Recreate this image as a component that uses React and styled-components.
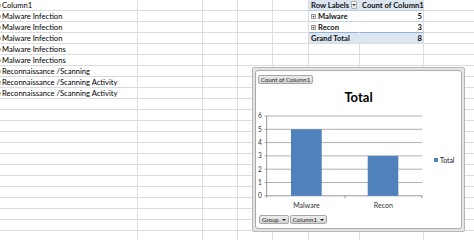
import React from 'react';
import styled, { createGlobalStyle } from 'styled-components';

const GlobalStyle = createGlobalStyle`
  html, body { margin: 0; padding: 0; background: #fff; overflow: hidden; }
  body { font-family: Lato, "Liberation Sans", sans-serif; color: #000; }
`;

const Page = styled.div`
  position: relative;
  width: 474px;
  height: 240px;
  overflow: hidden;
  background: #fff;
`;

const Sheet = styled.div`
  display: grid;
  grid-template-columns: 138px 65px 35px 35px 36px 51px 64px 60px;
  grid-auto-rows: 11px;
`;

const Cell = styled.div`
  box-sizing: border-box;
  position: relative;
  display: flex;
  align-items: center;
  justify-content: ${p => (p.$align === 'right' ? 'flex-end' : p.$align === 'between' ? 'space-between' : 'flex-start')};
  gap: 2px;
  padding: 0 ${p => (p.$align === 'right' ? '1px' : '0')} 0 ${p => p.$indent ?? 2}px;
  border-right: 1px solid ${p => (p.$noRight ? 'transparent' : '#dadcdd')};
  border-bottom: 1px solid ${p => p.$bottom || '#dadcdd'};
  background: ${p => p.$bg || 'transparent'};
  font-size: 7.6px;
  line-height: 10px;
  font-weight: ${p => (p.$bold ? 700 : 400)};
  color: ${p => (p.$bold ? '#111' : '#000')};
  white-space: nowrap;
`;

const Mark = styled.span`
  position: absolute;
  left: 0;
  top: 4px;
  width: 1px;
  height: 3px;
  background: #d8b985;
`;

const DropButton = styled.span`
  box-sizing: border-box;
  width: 8px;
  height: 8px;
  margin-right: 2px;
  border: 1px solid #b0b0b0;
  border-radius: 1px;
  background: linear-gradient(#ffffff, #e4e4e4);
  display: flex;
  align-items: center;
  justify-content: center;
  &::after {
    content: '';
    border-left: 2px solid transparent;
    border-right: 2px solid transparent;
    border-top: 2px solid #444;
  }
`;

const ExpandIcon = () => (
  <svg width="5" height="5" viewBox="0 0 5 5" style={{ flex: 'none' }}>
    <rect x="0.5" y="0.5" width="4" height="4" fill="#fff" stroke="#9a9a9a" strokeWidth="1" />
    <path d="M1.5 2.5h2M2.5 1.5v2" stroke="#444" strokeWidth="0.8" />
  </svg>
);

const ChartFrame = styled.div`
  position: absolute;
  left: 252px;
  top: 67px;
  width: 213px;
  height: 165px;
  box-sizing: border-box;
  border: 1px solid #b8b8b8;
  border-radius: 2px;
  background: #e4e4e4;
  padding: 2px;
`;

const Grip = styled.span`
  position: absolute;
  left: 101px;
  ${p => (p.$bottom ? 'bottom: 0;' : 'top: 0;')}
  width: 10px;
  height: 2px;
  background-image: radial-gradient(circle, #8a8a8a 0.6px, transparent 0.7px);
  background-size: 2px 2px;
`;

const ChartArea = styled.div`
  box-sizing: border-box;
  width: 100%;
  height: 100%;
  background: #fff;
  border: 1px solid #ababab;
  border-radius: 3px;
  display: flex;
  flex-direction: column;
  padding-top: 4px;
`;

const FieldButton = styled.div`
  box-sizing: border-box;
  height: 9px;
  display: inline-flex;
  align-items: center;
  gap: 3px;
  padding: 0 ${p => (p.$drop ? '2px' : '2px')} 0 2px;
  border: 1px solid #a8a8a8;
  border-radius: 2px;
  background: linear-gradient(#ededed, #d2d2d2);
  color: #2b2b2b;
  font-size: 6.1px;
  line-height: 7px;
  white-space: nowrap;
`;

const TopButtons = styled.div`
  display: flex;
  padding-left: 2px;
`;

const Arrow = styled.span`
  border-left: 2px solid transparent;
  border-right: 2px solid transparent;
  border-top: 2.5px solid #222;
`;

const Title = styled.div`
  margin-top: 5px;
  height: 16px;
  line-height: 16px;
  text-align: center;
  font-size: 13px;
  font-weight: 700;
  color: #000;
`;

const PlotRow = styled.div`
  margin-top: 5px;
  height: 100px;
  display: flex;
  align-items: center;
`;

const Legend = styled.div`
  margin-left: 2px;
  display: flex;
  align-items: center;
  gap: 2px;
  font-size: 6.8px;
  color: #222;
`;

const LegendKey = styled.span`
  width: 4px;
  height: 4px;
  background: #4f81bd;
`;

const Footer = styled.div`
  margin-top: 5px;
  padding-left: 3px;
  display: flex;
  gap: 1px;
`;

const COL_A = [
  'Column1',
  'Malware Infection',
  'Malware Infection',
  'Malware Infection',
  'Malware Infections',
  'Malware Infections',
  'Reconnaissance /Scanning',
  'Reconnaissance /Scanning Activity',
  'Reconnaissance /Scanning Activity',
];

const PIVOT_BG = '#dce6f1';

function pivotCells(r) {
  if (r === 0)
    return [
      <Cell key="f" $bg={PIVOT_BG} $bold $noRight $align="between" $bottom="#b8cce4">
        <span>Row Labels</span>
        <DropButton />
      </Cell>,
      <Cell key="g" $bg={PIVOT_BG} $bold $bottom="#b8cce4">Count of Column1</Cell>,
    ];
  if (r === 1 || r === 2)
    return [
      <Cell key="f" $bold $noRight $bottom={r === 1 ? '#c6d7ec' : '#95b3d7'} $indent={2}>
        <ExpandIcon />
        <span>{r === 1 ? 'Malware' : 'Recon'}</span>
      </Cell>,
      <Cell key="g" $bold $align="right" $bottom={r === 1 ? '#c6d7ec' : '#95b3d7'}>{r === 1 ? '5' : '3'}</Cell>,
    ];
  if (r === 3)
    return [
      <Cell key="f" $bg={PIVOT_BG} $bold $noRight>Grand Total</Cell>,
      <Cell key="g" $bg={PIVOT_BG} $bold $align="right">8</Cell>,
    ];
  return [<Cell key="f" />, <Cell key="g" />];
}

const ROWS = Array.from({ length: 22 }, (_, i) => i);

const yOf = v => 6 + (6 - v) * 13.3;

function Plot() {
  const grid = [0, 1, 2, 3, 4, 5, 6];
  return (
    <svg width="176" height="100" viewBox="0 0 176 100" style={{ display: 'block', flex: 'none' }}>
      {grid.map(v => (
        <g key={v}>
          <line x1="8.5" x2="166" y1={yOf(v)} y2={yOf(v)} stroke={v === 0 ? '#8c8c8c' : '#a6a6a6'} strokeWidth="0.9" />
          <text x="5.8" y={yOf(v) + 2.3} fontSize="6.6" textAnchor="end" fill="#333" fontFamily="Lato, sans-serif">{v}</text>
        </g>
      ))}
      <line x1="10.7" x2="10.7" y1={yOf(6)} y2={yOf(0) + 2} stroke="#8c8c8c" strokeWidth="0.9" />
      <line x1="89" x2="89" y1={yOf(0)} y2={yOf(0) + 2.5} stroke="#8c8c8c" strokeWidth="0.9" />
      <line x1="166" x2="166" y1={yOf(0)} y2={yOf(0) + 2.5} stroke="#8c8c8c" strokeWidth="0.9" />
      <rect x="35" y={yOf(5)} width="30.7" height={yOf(0) - yOf(5)} fill="#4f81bd" />
      <rect x="111.7" y={yOf(3)} width="30.6" height={yOf(0) - yOf(3)} fill="#4f81bd" />
      <text x="50.5" y="97.5" fontSize="7" textAnchor="middle" fill="#333" fontFamily="Lato, sans-serif">Malware</text>
      <text x="127.3" y="97.5" fontSize="7" textAnchor="middle" fill="#333" fontFamily="Lato, sans-serif">Recon</text>
    </svg>
  );
}

export default function App() {
  return (
    <Page>
      <GlobalStyle />
      <Sheet>
        {ROWS.map(r => (
          <React.Fragment key={r}>
            <Cell>
              {COL_A[r] && <Mark />}
              {COL_A[r] || ''}
            </Cell>
            <Cell />
            <Cell />
            <Cell />
            <Cell />
            {pivotCells(r)}
            <Cell />
          </React.Fragment>
        ))}
      </Sheet>
      <ChartFrame>
        <Grip />
        <Grip $bottom />
        <ChartArea>
          <TopButtons>
            <FieldButton>Count of Column1</FieldButton>
          </TopButtons>
          <Title>Total</Title>
          <PlotRow>
            <Plot />
            <Legend>
              <LegendKey />
              <span>Total</span>
            </Legend>
          </PlotRow>
          <Footer>
            <FieldButton $drop>Group<Arrow /></FieldButton>
            <FieldButton $drop>Column1<Arrow /></FieldButton>
          </Footer>
        </ChartArea>
      </ChartFrame>
    </Page>
  );
}
